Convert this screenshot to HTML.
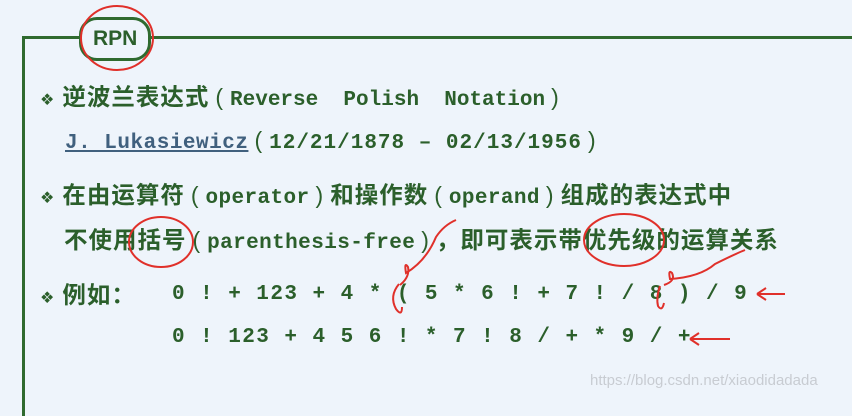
<!DOCTYPE html>
<html><head><meta charset="utf-8"><style>
html,body{margin:0;padding:0;width:852px;height:401px;overflow:hidden;background:#eef4fb;}
.l{position:absolute;white-space:pre;color:#2b5f2b;font-weight:bold;font-size:21px;line-height:24px;font-family:"Liberation Mono","Noto Sans CJK SC",monospace;}
.c{font-family:"Liberation Sans","Noto Sans CJK SC",sans-serif;font-size:23.5px;letter-spacing:1px}
.p{font-family:"Liberation Sans",sans-serif;font-size:23px;font-weight:normal;margin:0 7px 0 6px}
.b{font-size:16px;font-family:"DejaVu Sans",sans-serif;margin-right:8px}
.t{letter-spacing:0.4px}
</style></head><body>
<div style="position:absolute;left:22px;top:36px;width:840px;height:3px;background:#2f6a2f"></div>
<div style="position:absolute;left:22px;top:36px;width:3px;height:380px;background:#2f6a2f"></div>
<div style="position:absolute;left:79px;top:17px;width:72px;height:44px;border:3px solid #2f6a2f;border-radius:18px;background:#eef4fb;box-sizing:border-box"></div>
<div class="l" style="left:93px;top:27px;font-family:'Liberation Sans',sans-serif;font-size:21px">RPN</div>
<div class="l" style="left:40px;top:85px"><span class="b">❖</span><span class="c">逆波兰表达式</span><span class="p">(</span>Reverse  Polish  Notation<span class="p">)</span></div>
<div class="l" style="left:65px;top:128px"><span style="color:#40607e;text-decoration:underline;letter-spacing:0.5px">J. Lukasiewicz</span><span class="p">(</span><span style="letter-spacing:1px">12/21/1878 – 02/13/1956</span><span class="p">)</span></div>
<div class="l" style="left:40px;top:183px"><span class="b">❖</span><span class="c">在由运算符</span><span class="p">(</span><span class="t">operator</span><span class="p">)</span><span class="c">和操作数</span><span class="p">(</span><span class="t">operand</span><span class="p">)</span><span class="c">组成的表达式中</span></div>
<div class="l" style="left:64px;top:228px"><span class="c">不使用括号</span><span class="p">(</span><span class="t">parenthesis-free</span><span class="p">)</span><span class="c">，即可表示带优先级的运算关系</span></div>
<div class="l" style="left:40px;top:283px"><span class="b">❖</span><span class="c">例如：</span></div>
<div class="l" style="left:172px;top:283px;letter-spacing:1.45px">0 ! + 123 + 4 * ( 5 * 6 ! + 7 ! / 8 ) / 9</div>
<div class="l" style="left:172px;top:326px;letter-spacing:1.45px">0 ! 123 + 4 5 6 ! * 7 ! 8 / + * 9 / +</div>
<div style="position:absolute;left:590px;top:372px;font:15px 'Liberation Sans',sans-serif;color:#c8ccd2">https://blog.csdn.net/xiaodidadada</div>
<svg style="position:absolute;left:0;top:0" width="852" height="401" fill="none" stroke="#e0302a" stroke-width="2">
<ellipse cx="117" cy="38" rx="36" ry="32"/>
<ellipse cx="161" cy="242" rx="32" ry="25"/>
<ellipse cx="624" cy="240" rx="40" ry="26"/>
<path d="M399 284 q-10 12 -3 25 q6 8 6 -2"/>
<path d="M660 286 q-4 12 -2 20 q4 6 6 -3"/>
<path d="M400 285 q10 -8 8 -18 q-4 -6 -2 6 q20 -12 30 -36 q8 -12 20 -17"/>
<path d="M664 285 q12 -4 8 -12 q-4 -4 -2 6 q30 -2 45 -15 q20 -10 30 -14"/>
<path d="M785 294 h-28 m0 0 l9 -6 m-9 6 l9 6"/>
<path d="M730 339 h-40 m0 0 l9 -6 m-9 6 l9 6"/>
</svg>
</body></html>
